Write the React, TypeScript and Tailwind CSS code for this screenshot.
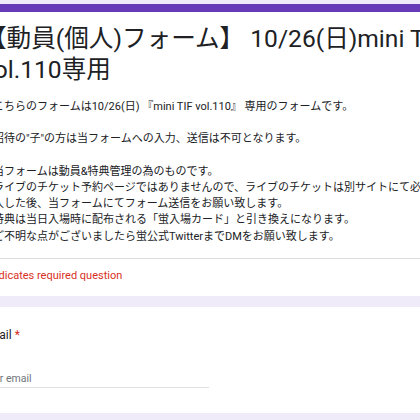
const descLines = [
  "※こちらのフォームは10/26(日) 『mini TIF vol.110』 専用のフォームです。",
  "",
  "※招待の\"子\"の方は当フォームへの入力、送信は不可となります。",
  "",
  "※当フォームは動員&特典管理の為のものです。",
  "※ライブのチケット予約ページではありませんので、ライブのチケットは別サイトにて必ず",
  "購入した後、当フォームにてフォーム送信をお願い致します。",
  "※特典は当日入場時に配布される「蛍入場カード」と引き換えになります。",
  "※ご不明な点がございましたら蛍公式TwitterまでDMをお願い致します。",
];

export default function App() {
  return (
    <div className="h-[420px] w-[420px] overflow-hidden bg-[#f0ebf8] pt-[4px] font-[family-name:Roboto,'Noto_Sans_CJK_JP',sans-serif] text-[#202124]">
      <div className="-ml-[36px] flex w-[480px] flex-col gap-[11px]">
        {/* Header card */}
        <div className="bg-white">
          <div className="h-[8px] bg-[#673ab7]" />
          <div className="border-b border-[#dadce0] px-[18px] pb-[13px] pt-[11px]">
            <h1 className="whitespace-nowrap text-[24.6px] font-normal leading-[31px]">
              <div>【動員(個人)フォーム】 10/26(日)mini TIF</div>
              <div>vol.110専用</div>
            </h1>
            <div className="mt-[14px] whitespace-nowrap text-[11px] leading-[16.2px]">
              {descLines.map((line, i) =>
                line ? <div key={i}>{line}</div> : <div key={i} className="h-[16.2px]" />
              )}
            </div>
          </div>
          <div className="px-[18px] pb-[12px] pt-[9px] text-[11px] leading-[16px] text-[#d93025]">
            * Indicates required question
          </div>
        </div>

        {/* Email card */}
        <div className="bg-white px-[18px] pb-[25px] pt-[19px]">
          <div className="text-[12px] leading-[18px]">
            Email <span className="text-[#d93025]">*</span>
          </div>
          <div className="mt-[26px] w-[227px] border-b border-[#e0e0e0] text-[10.5px] leading-[17px] text-[#70757a]">
            Your email
          </div>
        </div>
      </div>
    </div>
  );
}
